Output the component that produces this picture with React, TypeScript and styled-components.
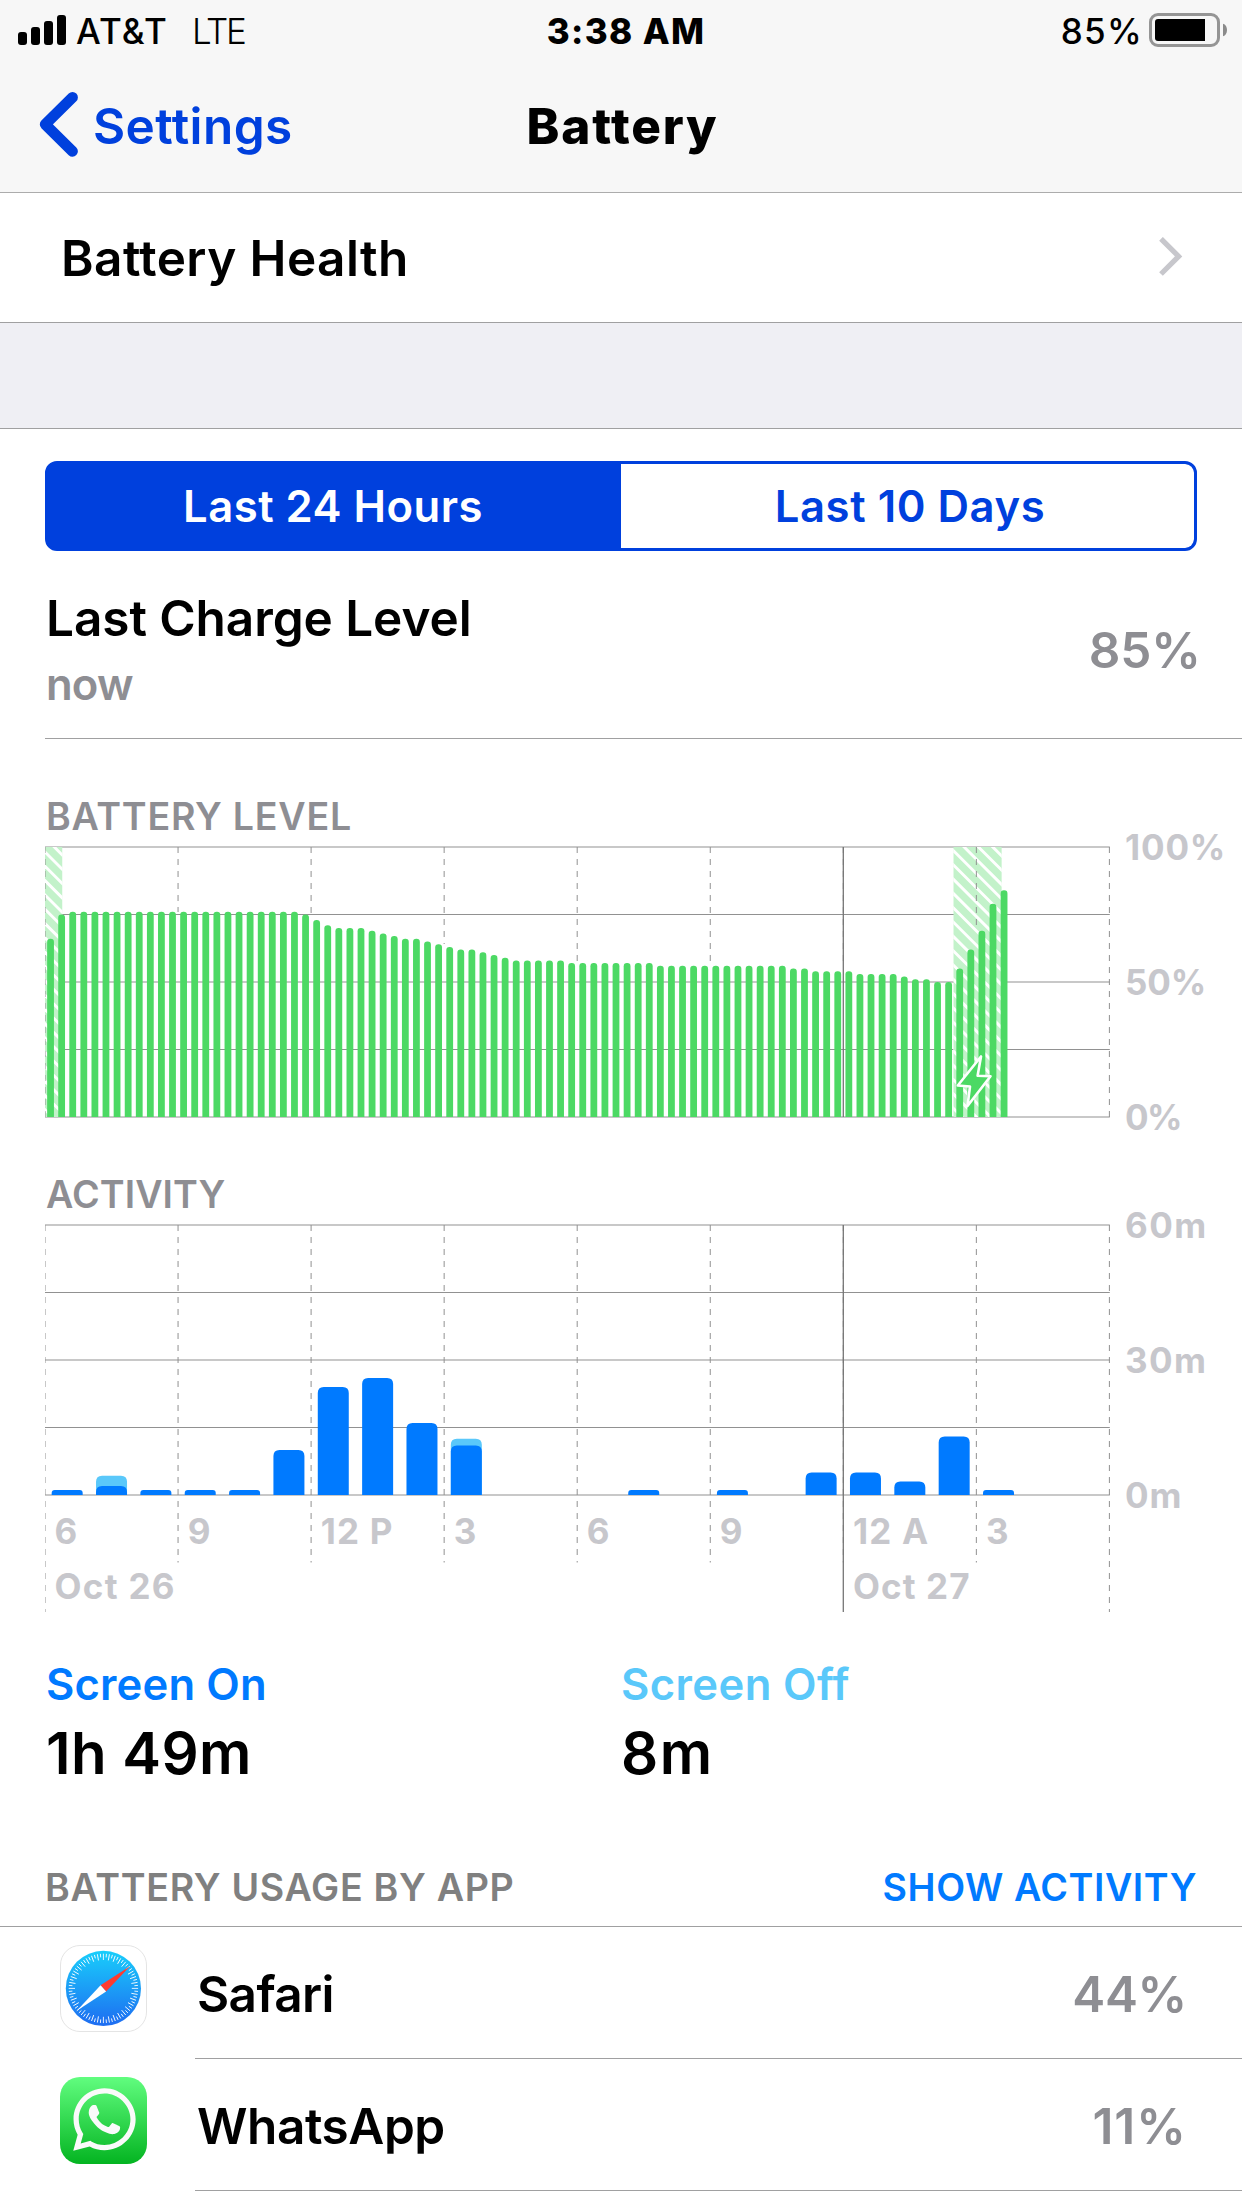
import React from 'react';
import styled, { createGlobalStyle } from 'styled-components';
import { FaWhatsapp } from 'react-icons/fa';

const GlobalStyle = createGlobalStyle`
  * { box-sizing: border-box; }
  html, body { margin: 0; padding: 0; background: #fff; }
  body { font-family: Inter, "Liberation Sans", sans-serif; color: #000; }
  svg { display: block; flex: none; }
`;

const color = {
  tint: '#0040dd',
  blue: '#007aff',
  sky: '#5ac8fa',
  green: '#4cd964',
  hatch: '#c3f2ca',
  gray: '#8e8e93',
  axis: '#c7c7cc',
  line: '#a0a0a1',
  grid: '#919191',
};

/* ---------- shared ---------- */

const Screen = styled.div`
  width: 1242px;
  height: 2208px;
  display: flex;
  flex-direction: column;
  background: #fff;
  overflow: hidden;
`;

const Label = styled.span<{
  $size: number;
  $line: number;
  $weight?: number;
  $track?: number;
  $color?: string;
}>`
  font-size: ${(p) => p.$size}px;
  line-height: ${(p) => p.$line}px;
  font-weight: ${(p) => p.$weight ?? 600};
  letter-spacing: ${(p) => p.$track ?? 0}px;
  color: ${(p) => p.$color ?? '#000'};
  white-space: nowrap;
`;

/* ---------- header ---------- */

const Header = styled.header`
  background: #f7f7f7;
  border-bottom: 1px solid #acacac;
`;

const StatusBar = styled.div`
  display: grid;
  grid-template-columns: 1fr auto 1fr;
  height: 62px;
`;

const Carrier = styled.div`
  display: flex;
  padding-left: 18px;
  gap: 10px;
`;

const Network = styled(Label)`
  margin-left: 14px;
`;

const Clock = styled(Label)`
  padding-left: 10px;
`;

const Power = styled.div`
  display: flex;
  justify-content: flex-end;
  gap: 6px;
  padding-right: 15px;
`;

const NavBar = styled.nav`
  display: grid;
  grid-template-columns: 1fr auto 1fr;
  align-items: center;
  height: 130px;
  padding-bottom: 2px;
`;

const BackButton = styled.div`
  display: flex;
  align-items: center;
  gap: 14px;
  padding-left: 39px;
`;

const Title = styled(Label)`
  padding-left: 3px;
`;

/* ---------- rows ---------- */

const HealthRow = styled.div`
  display: flex;
  justify-content: space-between;
  align-items: center;
  height: 130px;
  padding: 1px 59px 0 61px;
  border-bottom: 1px solid ${color.line};
`;

const Disclosure = styled.div`
  padding-bottom: 3px;
`;

const SectionGap = styled.div`
  height: 106px;
  background: #efeff4;
  border-bottom: 1px solid ${color.line};
`;

const Segmented = styled.div`
  display: grid;
  grid-template-columns: 1fr 1fr;
  height: 90px;
  margin: 32px 45px 0;
  border: 3px solid ${color.tint};
  border-radius: 12px;
  background: ${color.tint};
  overflow: hidden;
`;

const Segment = styled.div<{ $active?: boolean }>`
  display: flex;
  align-items: center;
  justify-content: center;
  padding: ${(p) => (p.$active ? '0 3px 0 0' : '0 0 0 5px')};
  background: ${(p) => (p.$active ? color.tint : '#fff')};
  border-radius: ${(p) => (p.$active ? '0' : '0 8px 8px 0')};
`;

const ChargeRow = styled.div`
  display: flex;
  justify-content: space-between;
  align-items: center;
  margin-left: 45px;
  padding: 37px 41px 27px 1px;
  border-bottom: 1px solid ${color.line};
`;

const ChargeText = styled.div`
  display: flex;
  flex-direction: column;
  gap: 10px;
`;

/* ---------- charts ---------- */

const ChartSection = styled.section<{ $top: number }>`
  display: flex;
  flex-direction: column;
  padding: ${(p) => p.$top}px 0 0 45px;
`;

const ChartTitle = styled(Label)`
  padding-left: 1px;
`;

const ChartRow = styled.div`
  display: flex;
  align-items: flex-start;
`;

const Plot = styled.div`
  display: grid;
  & > * { grid-area: 1 / 1; }
`;

const Axis = styled.div`
  display: flex;
  flex-direction: column;
  justify-content: space-between;
  height: 286px;
  padding-left: 14px;
`;

const Ticks = styled.div`
  align-self: end;
  display: grid;
  grid-template-columns: repeat(8, 133.05px);
  row-gap: 13px;
  padding-bottom: 5px;
`;

const Tick = styled(Label)<{ $col: number; $row: number }>`
  grid-column: ${(p) => p.$col};
  grid-row: ${(p) => p.$row};
  padding-left: 9.6px;
`;

/* ---------- totals ---------- */

const Totals = styled.div`
  display: grid;
  grid-template-columns: 575px 576px;
  padding: 46px 45px 0 46px;
`;

const Total = styled.div`
  display: flex;
  flex-direction: column;
  gap: 7px;
`;

/* ---------- usage list ---------- */

const UsageHeader = styled.div`
  display: flex;
  justify-content: space-between;
  padding: 77px 45px 16px;
  border-bottom: 1px solid ${color.line};
`;

const AppRow = styled.div`
  display: flex;
  align-items: flex-start;
  height: 132px;
  padding-left: 60px;
`;

const IconBox = styled.div`
  width: 135px;
  padding-top: 18px;
`;

const AppInfo = styled.div`
  flex: 1;
  display: flex;
  justify-content: space-between;
  height: 132px;
  padding: 37px 55px 0 2px;
  border-bottom: 1px solid ${color.line};
`;

/* ---------- icons ---------- */

const SignalIcon = () => (
  <svg width="48" height="62" fill="#000">
    <rect x="0" y="32" width="9" height="13" rx="3" />
    <rect x="13" y="27" width="9" height="18" rx="3" />
    <rect x="26" y="21" width="9" height="24" rx="3" />
    <rect x="39" y="15" width="9" height="30" rx="3" />
  </svg>
);

const BatteryIcon = () => (
  <svg width="78" height="62">
    <rect x="1.5" y="14.5" width="68" height="31" rx="7.5" fill="none" stroke="#959595" strokeWidth="3" />
    <path d="M9 19H56V41H9A3 3 0 0 1 6 38V22A3 3 0 0 1 9 19Z" fill="#000" />
    <path d="M74 23.7C76.6 24.4 78 27 78 30S76.6 35.6 74 36.3Z" fill="#8b8b8b" />
  </svg>
);

const BackIcon = () => (
  <svg width="40" height="70" fill="none" stroke={color.tint} strokeWidth="10.8" strokeLinecap="round" strokeLinejoin="round">
    <path d="M33.5 6.4L6.2 33.3L33.5 60.3" />
  </svg>
);

const DisclosureIcon = () => (
  <svg width="25" height="40" fill="none" stroke={color.axis} strokeWidth="5.2">
    <path d="M3 1.8L20.6 19.4L3 37" />
  </svg>
);

const SafariIcon = () => (
  <svg width="87" height="87">
    <defs>
      <linearGradient id="compass" x1="0" y1="0" x2="0" y2="1">
        <stop offset="0" stopColor="#19cefb" />
        <stop offset="1" stopColor="#1e6cf1" />
      </linearGradient>
    </defs>
    <rect x="0.5" y="0.5" width="86" height="86" rx="19.5" fill="#fff" stroke="#e4e4e4" />
    <circle cx="43.4" cy="43.4" r="37.6" fill="url(#compass)" />
    {Array.from({ length: 72 }, (_, i) => (
      <line
        key={i}
        x1="43.4"
        x2="43.4"
        y1="8.7"
        y2={i % 2 ? 12.3 : 15}
        stroke="#fff"
        strokeWidth="0.85"
        transform={`rotate(${i * 5} 43.4 43.4)`}
      />
    ))}
    <path d="M70.3 20.9L40.6 40.3L46.1 46.4Z" fill="#ff3b30" />
    <path d="M16.8 65.8L40.6 40.3L46.1 46.4Z" fill="#fff" />
  </svg>
);

const WhatsAppIcon = () => (
  <svg width="87" height="87">
    <defs>
      <linearGradient id="chat" x1="0" y1="0" x2="0" y2="1">
        <stop offset="0" stopColor="#61fd7f" />
        <stop offset="1" stopColor="#04b421" />
      </linearGradient>
    </defs>
    <rect width="87" height="87" rx="20" fill="url(#chat)" />
    <FaWhatsapp x="8.8" y="6.9" size={71.3} color="#fafafa" />
  </svg>
);

/* ---------- chart data ---------- */

const SPAN = 133.05;
const BASE = 278;
const HEIGHT = 270;
const MIDNIGHT = 6;

const run = (value: number, count: number) => Array<number>(count).fill(value);

const levels = [
  66, 75, ...run(76, 21), 75, 73, 71, 70, 70, 70, 69, 68, 67, 66, 66, 65, 64, 63, 62, 62, 61, 60, 59,
  ...run(58, 5), ...run(57, 8), ...run(56, 12), 55, 55, ...run(54, 4), ...run(53, 4), 52, 51, 51, 50, 50,
  55, 62, 69, 79, 84,
];

const activity: { hour: number; on: number; total?: number }[] = [
  { hour: 0, on: 1 },
  { hour: 1, on: 2, total: 4.3 },
  { hour: 2, on: 1 },
  { hour: 3, on: 1 },
  { hour: 4, on: 1 },
  { hour: 5, on: 10 },
  { hour: 6, on: 24 },
  { hour: 7, on: 26 },
  { hour: 8, on: 16 },
  { hour: 9, on: 11, total: 12.5 },
  { hour: 13, on: 1 },
  { hour: 15, on: 1 },
  { hour: 17, on: 5 },
  { hour: 18, on: 5 },
  { hour: 19, on: 3 },
  { hour: 20, on: 13 },
  { hour: 21, on: 1 },
];

const hours = ['6', '9', '12 P', '3', '6', '9', '12 A', '3'];

function column(x: number, width: number, height: number, radius: number) {
  const r = Math.min(radius, height);
  const top = BASE - height;
  return `M${x} ${BASE}V${top + r}Q${x} ${top} ${x + r} ${top}H${x + width - r}Q${x + width} ${top} ${x + width} ${top + r}V${BASE}Z`;
}

const HorizontalLines = () => (
  <g stroke={color.grid}>
    {[8, 75.5, 143, 210.5, 278].map((y) => (
      <line key={y} x1="0" x2={SPAN * 8 + 0.4} y1={y} y2={y} />
    ))}
  </g>
);

const VerticalLines = ({ ends }: { ends: number[] }) => (
  <g stroke={color.grid} strokeDasharray="6 6">
    {ends.map((end, i) => (
      <line key={i} x1={i * SPAN} x2={i * SPAN} y1="8" y2={end} />
    ))}
  </g>
);

const MidnightLine = ({ bottom }: { bottom: number }) => (
  <line x1={MIDNIGHT * SPAN} x2={MIDNIGHT * SPAN} y1="8" y2={bottom} stroke="#757575" strokeWidth="1.3" />
);

const Charging = ({ id, x, width, phase }: { id: string; x: number; width: number; phase: number }) => (
  <g clipPath={`url(#${id})`}>
    <clipPath id={id}>
      <rect x={x} y="8" width={width} height={HEIGHT} />
    </clipPath>
    <rect x={x} y="8" width={width} height={HEIGHT} fill={color.hatch} />
    <g stroke="#fff" strokeWidth="2.9">
      {Array.from({ length: 26 }, (_, i) => {
        const y = phase + (i - 5) * 14.32;
        return <line key={i} x1={x - 5} y1={y - 5} x2={x + 60} y2={y + 60} />;
      })}
    </g>
  </g>
);

const LevelChart = () => (
  <svg width="1066" height="286">
    <HorizontalLines />
    <Charging id="morning" x={0} width={17.5} phase={13} />
    <Charging id="night" x={908.3} width={48.5} phase={11.5} />
    <VerticalLines ends={[278, 73, 74, 105, 122, 122, 127, 86, 278]} />
    <g fill={color.green}>
      {levels.map((level, i) => (
        <path key={i} d={column((i + 0.5) * (SPAN / 12) - 3.4, 6.8, level * 2.7, 3.2)} />
      ))}
    </g>
    <MidnightLine bottom={278} />
    <path
      d="M936 217.5L932.6 236.7L945.5 237.3L922.5 267L925 247.5L912.8 246.5Z"
      fill={color.green}
      stroke="#fff"
      strokeWidth="2.6"
      strokeLinejoin="round"
    />
  </svg>
);

const ActivityChart = () => (
  <svg width="1066" height="395">
    <HorizontalLines />
    <VerticalLines ends={[395, 345.5, 345.5, 345.5, 345.5, 345.5, 345.5, 345.5, 395]} />
    {activity.map(({ hour, on, total }) => {
      const x = (hour + 0.5) * (SPAN / 3) - 15.5;
      return (
        <g key={hour}>
          {total && <path d={column(x, 31, total * 4.5, 6)} fill={color.sky} />}
          <path d={column(x, 31, on * 4.5 + (on === 1 ? 0.5 : 0), on === 1 ? 3 : 6)} fill={color.blue} />
        </g>
      );
    })}
    <MidnightLine bottom={395} />
  </svg>
);

const AxisLabels = ({ items }: { items: [string, number][] }) => (
  <Axis>
    {items.map(([text, track]) => (
      <Label key={text} $size={35} $line={16} $weight={700} $track={track} $color={color.axis}>
        {text}
      </Label>
    ))}
  </Axis>
);

const AppEntry = ({ name, share, track, shareTrack, icon }: {
  name: string;
  share: string;
  track: number;
  shareTrack: number;
  icon: React.ReactNode;
}) => (
  <AppRow>
    <IconBox>{icon}</IconBox>
    <AppInfo>
      <Label $size={49.5} $line={60} $track={track}>{name}</Label>
      <Label $size={49.5} $line={60} $track={shareTrack} $color={color.gray}>{share}</Label>
    </AppInfo>
  </AppRow>
);

export default function App() {
  return (
    <Screen>
      <GlobalStyle />
      <Header>
        <StatusBar>
          <Carrier>
            <SignalIcon />
            <Label $size={35} $line={62} $weight={500} $track={1.19}>AT&amp;T</Label>
            <Network $size={35} $line={62} $weight={300} $track={-2.33}>LTE</Network>
          </Carrier>
          <Clock $size={35} $line={62} $weight={800} $track={1.36}>3:38 AM</Clock>
          <Power>
            <Label $size={35} $line={62} $weight={500} $track={1.25}>85%</Label>
            <BatteryIcon />
          </Power>
        </StatusBar>
        <NavBar>
          <BackButton>
            <BackIcon />
            <Label $size={49.5} $line={60} $track={0.42} $color={color.tint}>Settings</Label>
          </BackButton>
          <Title $size={49.5} $line={60} $weight={800} $track={1.79}>Battery</Title>
        </NavBar>
      </Header>

      <HealthRow>
        <Label $size={49.5} $line={60} $track={0.42}>Battery Health</Label>
        <Disclosure>
          <DisclosureIcon />
        </Disclosure>
      </HealthRow>
      <SectionGap />

      <Segmented>
        <Segment $active>
          <Label $size={43.6} $line={53} $track={0.5} $color="#fff">Last 24 Hours</Label>
        </Segment>
        <Segment>
          <Label $size={43.6} $line={53} $track={0.57} $color={color.tint}>Last 10 Days</Label>
        </Segment>
      </Segmented>

      <ChargeRow>
        <ChargeText>
          <Label $size={49.5} $line={60} $track={-0.07}>Last Charge Level</Label>
          <Label $size={43.6} $line={53} $track={-0.8} $color={color.gray}>now</Label>
        </ChargeText>
        <Label $size={49.5} $line={60} $track={-0.08} $color={color.gray}>85%</Label>
      </ChargeRow>

      <ChartSection $top={55}>
        <ChartTitle $size={37.6} $line={45} $track={0.74} $color={color.gray}>BATTERY LEVEL</ChartTitle>
        <ChartRow>
          <LevelChart />
          <AxisLabels items={[['100%', 0.86], ['50%', -0.15], ['0%', -1.6]]} />
        </ChartRow>
      </ChartSection>

      <ChartSection $top={47}>
        <ChartTitle $size={37.6} $line={45} $track={0.1} $color={color.gray}>ACTIVITY</ChartTitle>
        <ChartRow>
          <Plot>
            <ActivityChart />
            <Ticks>
              {hours.map((hour, i) => (
                <Tick key={i} $col={i + 1} $row={1} $size={35} $line={42} $weight={700} $track={1.2} $color={color.axis}>
                  {hour}
                </Tick>
              ))}
              <Tick $col={1} $row={2} $size={35} $line={42} $weight={700} $track={1.29} $color={color.axis}>Oct 26</Tick>
              <Tick $col={MIDNIGHT + 1} $row={2} $size={35} $line={42} $weight={700} $track={1.11} $color={color.axis}>Oct 27</Tick>
            </Ticks>
          </Plot>
          <AxisLabels items={[['60m', 1.49], ['30m', 1.43], ['0m', 0.8]]} />
        </ChartRow>
      </ChartSection>

      <Totals>
        <Total>
          <Label $size={43.6} $line={53} $track={0.15} $color={color.blue}>Screen On</Label>
          <Label $size={58.2} $line={70} $track={0.44}>1h 49m</Label>
        </Total>
        <Total>
          <Label $size={43.6} $line={53} $track={0.4} $color={color.sky}>Screen Off</Label>
          <Label $size={58.2} $line={70} $track={1.5}>8m</Label>
        </Total>
      </Totals>

      <UsageHeader>
        <Label $size={37.6} $line={45} $track={0.69} $color="#808080">BATTERY USAGE BY APP</Label>
        <Label $size={37.6} $line={45} $track={0.56} $color={color.blue}>SHOW ACTIVITY</Label>
      </UsageHeader>
      <AppEntry name="Safari" share="44%" track={-0.6} shareTrack={-0.3} icon={<SafariIcon />} />
      <AppEntry name="WhatsApp" share="11%" track={-0.43} shareTrack={1} icon={<WhatsAppIcon />} />
    </Screen>
  );
}
